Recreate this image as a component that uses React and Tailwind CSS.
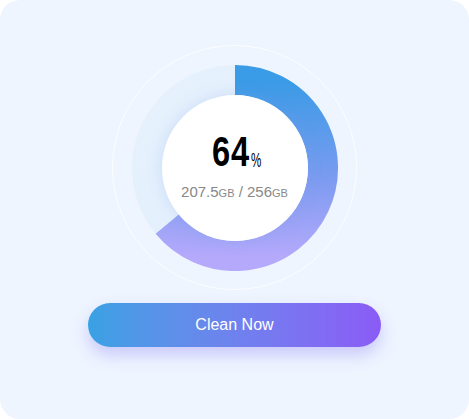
export default function App() {
  // 64% arc, clockwise from 12 o'clock
  const r = 88;
  const a = 0.64 * 2 * Math.PI;
  const ex = 103 + r * Math.sin(a);
  const ey = 103 - r * Math.cos(a);

  return (
    <div className="h-[419px] w-[469px] bg-white">
      <div className="flex h-full w-full flex-col items-center rounded-[20px] bg-[#eef5ff] pt-[45px]">
        <div className="flex h-[245px] w-[245px] items-center justify-center rounded-full border border-white/80">
          <div className="relative h-[206px] w-[206px]">
            <svg width="206" height="206" viewBox="0 0 206 206" className="absolute inset-0">
              <defs>
                <linearGradient id="arc" gradientUnits="userSpaceOnUse" x1="0" y1="15" x2="0" y2="191">
                  <stop offset="0%" stopColor="#3a9be6" />
                  <stop offset="55%" stopColor="#7a9bf0" />
                  <stop offset="100%" stopColor="#b4a9fb" />
                </linearGradient>
                <linearGradient id="track" x1="0" y1="0" x2="1" y2="1">
                  <stop offset="0%" stopColor="#e6f1fd" />
                  <stop offset="100%" stopColor="#e1eefc" />
                </linearGradient>
              </defs>
              <circle cx="103" cy="103" r={r} fill="none" stroke="url(#track)" strokeWidth="30" />
              <path
                d={`M103 15 A${r} ${r} 0 1 1 ${ex.toFixed(2)} ${ey.toFixed(2)}`}
                fill="none"
                stroke="url(#arc)"
                strokeWidth="30"
              />
            </svg>
            <div className="absolute left-[30px] top-[30px] flex h-[146px] w-[146px] flex-col items-center justify-center rounded-full bg-white shadow-[0_0_14px_rgba(120,160,230,0.25)]">
              <div className="mt-[3px] flex items-end pl-[4px] font-['Liberation_Sans',sans-serif] font-bold text-black">
                <span className="-mr-[11px] inline-block origin-left scale-x-[0.76] text-[43px] leading-[34px] tracking-[1px]">64</span>
                <span className="-mr-[7px] inline-block origin-left scale-x-[0.58] text-[20px] font-normal leading-[16px]">%</span>
              </div>
              <div className="mt-[13px] font-['Liberation_Sans',sans-serif] text-[15px] text-[#888888]">
                207.5<span className="text-[11px]">GB</span> / 256<span className="text-[11px]">GB</span>
              </div>
            </div>
          </div>
        </div>
        <button
          type="button"
          className="mt-[13px] h-[44px] w-[293px] rounded-full bg-gradient-to-r from-[#38a1e4] to-[#8a5bf6] font-['Liberation_Sans',sans-serif] text-[16px] text-white shadow-[0_8px_16px_rgba(120,100,240,0.3)]"
        >
          Clean Now
        </button>
      </div>
    </div>
  );
}
